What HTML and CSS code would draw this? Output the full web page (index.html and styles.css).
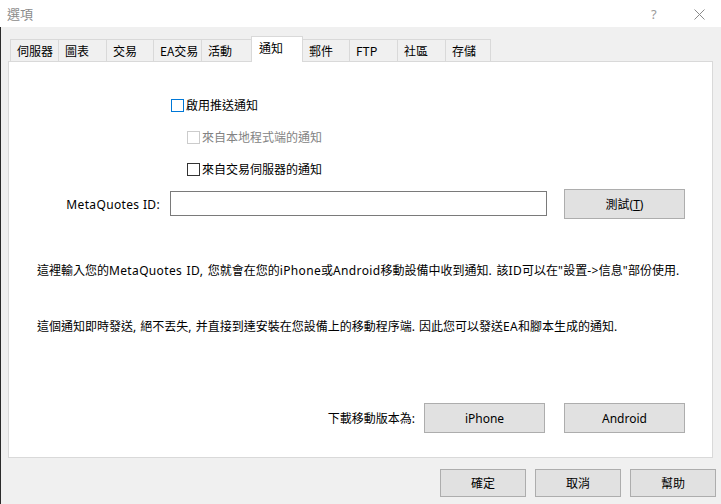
FILE: index.html
```html
<!DOCTYPE html>
<html lang="zh-Hant">
<head>
<meta charset="utf-8">
<title>選項</title>
<link rel="stylesheet" href="styles.css">
</head>
<body>
<div class="window">
  <div class="titlebar">
    <span class="title">選項</span>
    <span class="tb-help">?</span>
    <span class="tb-close">
      <svg width="11" height="11" viewBox="0 0 11 11"><path d="M0.5 0.5 L10.5 10.5 M10.5 0.5 L0.5 10.5" stroke="#8a8a8a" stroke-width="1" fill="none"/></svg>
    </span>
  </div>
  <div class="body">
    <div class="tabs">
      <div class="tab w48">伺服器</div>
      <div class="tab w48">圖表</div>
      <div class="tab w47">交易</div>
      <div class="tab w48">EA交易</div>
      <div class="tab w50">活動</div>
      <div class="tab active">通知</div>
      <div class="tab w46">郵件</div>
      <div class="tab w48">FTP</div>
      <div class="tab w48">社區</div>
      <div class="tab w46 last">存儲</div>
    </div>
    <div class="panel">
      <div class="row row1">
        <span class="cb cb-focus"></span><span class="lbl">啟用推送通知</span>
      </div>
      <div class="row row2">
        <span class="cb cb-disabled"></span><span class="lbl disabled">來自本地程式端的通知</span>
      </div>
      <div class="row row2">
        <span class="cb"></span><span class="lbl">來自交易伺服器的通知</span>
      </div>
      <div class="idrow">
        <span class="idlabel en">MetaQuotes ID:</span>
        <span class="input"></span>
        <span class="btn btn-wide">測試(<u>T</u>)</span>
      </div>
      <p class="para p1">這裡輸入您的<span class="en">MetaQuotes ID, </span>您就會在您的<span class="en">iPhone</span>或<span class="en">Android</span>移動設備中收到通知<span class="en">. </span>該<span class="en">ID</span>可以在<span class="en">"</span>設置<span class="en">-&gt;</span>信息<span class="en">"</span>部份使用<span class="en">.</span></p>
      <p class="para p2">這個通知即時發送, 絕不丟失, 并直接到達安裝在您設備上的移動程序端. 因此您可以發送<span class="en">EA</span>和腳本生成的通知.</p>
      <div class="dlrow">
        <span class="dllabel">下載移動版本為:</span>
        <span class="btn btn-wide">iPhone</span>
        <span class="btn btn-wide">Android</span>
      </div>
    </div>
    <div class="footer">
      <span class="btn btn-foot">確定</span>
      <span class="btn btn-foot">取消</span>
      <span class="btn btn-foot">幫助</span>
    </div>
  </div>
</div>
</body>
</html>
```
FILE: styles.css
```css
* { box-sizing: border-box; }
html, body { margin: 0; padding: 0; }
body {
  width: 721px;
  height: 504px;
  overflow: hidden;
  background: #f0f0f0;
  font-family: "Noto Sans", "Noto Sans CJK TC", sans-serif;
  font-size: 12px;
  color: #000;
}
.window { width: 721px; height: 504px; }
.titlebar {
  height: 27px;
  background: #fff;
  display: flex;
  align-items: center;
  padding-left: 7px;
}
.title {
  font-family: "Noto Sans CJK TC", sans-serif;
  font-size: 13px;
  color: #8c8c8c;
  flex: 1;
  line-height: 16px;
}
.tb-help {
  color: #9a9a9a;
  font-size: 13px;
  width: 43px;
  line-height: 16px;
}
.tb-close {
  width: 27px;
  display: flex;
  align-items: center;
  padding-top: 1px;
}
.body {
  height: 477px;
  border-left: 1px solid #2b2b2b;
}
.tabs {
  display: flex;
  align-items: flex-end;
  height: 34px;
  padding-left: 9px;
  position: relative;
  z-index: 1;
}
.tab {
  height: 22px;
  border: 1px solid #d9d9d9;
  border-right: none;
  border-bottom: none;
  background: #f0f0f0;
  padding-left: 6px;
  line-height: 21px;
  font-family: "Noto Sans CJK TC", sans-serif;
  white-space: nowrap;
}
.tab.last { border-right: 1px solid #d9d9d9; }
.w46 { width: 46px; }
.w47 { width: 47px; }
.w48 { width: 48px; }
.w50 { width: 50px; }
.tab.active {
  width: 52px;
  height: 26px;
  margin-bottom: -1px;
  background: #fff;
  border-right: 1px solid #d9d9d9;
  padding-left: 7px;
  line-height: 22px;
}
.tab.active + .tab { border-left: none; }
.panel {
  margin: 0 8px 0 7px;
  height: 397px;
  background: #fff;
  border: 1px solid #d9d9d9;
  padding-top: 33px;
}
.row {
  display: flex;
  align-items: center;
  height: 20px;
  margin-bottom: 12px;
}
.row1 { padding-left: 162px; }
.row2 { padding-left: 178px; }
.cb {
  width: 13px;
  height: 13px;
  border: 1px solid #333;
  background: #fff;
  margin-right: 2px;
}
.cb-focus { border-color: #0078d7; }
.cb-disabled { border-color: #cccccc; }
.lbl { font-family: "Noto Sans CJK TC", sans-serif; line-height: 16px; }
.lbl.disabled { color: #838383; }
.en { letter-spacing: 0.35px; }
.idrow {
  display: flex;
  align-items: center;
  height: 30px;
  margin-top: -2px;
}
.idlabel {
  width: 152px;
  text-align: right;
  padding-right: 1px;
}
.input {
  width: 377px;
  height: 25px;
  border: 1px solid #7a7a7a;
  margin-left: 9px;
  margin-right: 17px;
  margin-top: -1px;
  background: #fff;
}
.btn {
  display: flex;
  align-items: center;
  justify-content: center;
  background: #e1e1e1;
  border: 1px solid #adadad;
  font-family: "Noto Sans", "Noto Sans CJK TC", sans-serif;
}
.btn-wide { width: 121px; height: 30px; }
.btn u { text-decoration: underline; }
.para {
  margin: 0;
  padding-left: 28px;
  line-height: 16px;
  white-space: nowrap;
  word-spacing: 1px;
}
.p1 { margin-top: 44px; }
.p2 { margin-top: 40px; }
.dlrow {
  display: flex;
  align-items: center;
  justify-content: flex-end;
  padding-right: 27px;
  margin-top: 68px;
  height: 30px;
}
.dllabel { margin-right: 9px; }
.dlrow .btn + .btn { margin-left: 19px; }
.footer {
  display: flex;
  justify-content: flex-end;
  padding-right: 5px;
  margin-top: 11px;
  gap: 9px;
}
.btn-foot { width: 86px; height: 28px; }
```
